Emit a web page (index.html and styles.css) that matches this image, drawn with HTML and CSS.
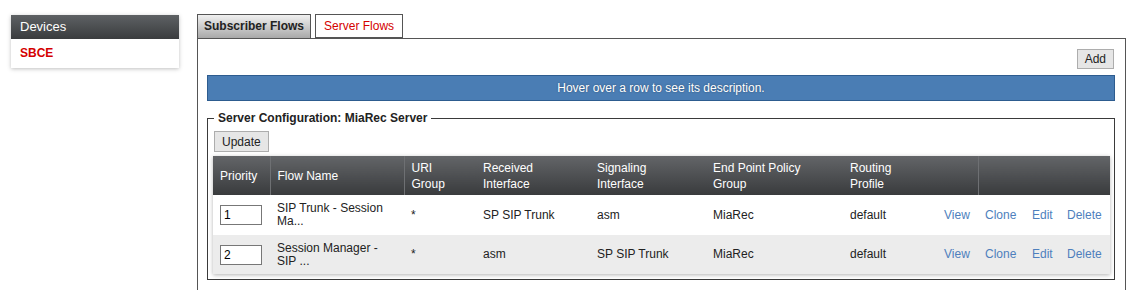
FILE: index.html
```html
<!DOCTYPE html>
<html lang="en">
<head>
    <meta charset="UTF-8">
    <title>Server Flows</title>
    <link rel="stylesheet" href="styles.css">
</head>
<body>
    <div class="sidebar">
        <div class="sidebar-head">Devices</div>
        <div class="sidebar-item">SBCE</div>
    </div>

    <div class="main">
        <div class="tabs">
            <div class="tab">Subscriber Flows</div>
            <div class="tab active">Server Flows</div>
        </div>

        <div class="tab-panel">
            <div class="toolbar">
                <button class="btn">Add</button>
            </div>
            <div class="info-bar">Hover over a row to see its description.</div>

            <fieldset class="group">
                <legend>Server Configuration: MiaRec Server</legend>
                <button class="btn">Update</button>

                <table class="flows">
                    <colgroup>
                        <col style="width: 57px">
                        <col style="width: 134px">
                        <col style="width: 72px">
                        <col style="width: 114px">
                        <col style="width: 116px">
                        <col style="width: 137px">
                        <col style="width: 94px">
                        <col style="width: 41px">
                        <col style="width: 47px">
                        <col style="width: 35px">
                        <col>
                    </colgroup>
                    <thead>
                        <tr>
                            <th>Priority</th>
                            <th class="sep">Flow Name</th>
                            <th class="sep">URI<br>Group</th>
                            <th>Received<br>Interface</th>
                            <th>Signaling<br>Interface</th>
                            <th>End Point Policy<br>Group</th>
                            <th colspan="2">Routing<br>Profile</th>
                            <th colspan="3" class="sep"></th>
                        </tr>
                    </thead>
                    <tbody>
                        <tr>
                            <td><input class="prio" type="text" value="1"></td>
                            <td>SIP Trunk - Session Ma...</td>
                            <td>*</td>
                            <td>SP SIP Trunk</td>
                            <td>asm</td>
                            <td>MiaRec</td>
                            <td>default</td>
                            <td><a href="#">View</a></td>
                            <td><a href="#">Clone</a></td>
                            <td><a href="#">Edit</a></td>
                            <td><a href="#">Delete</a></td>
                        </tr>
                        <tr class="alt">
                            <td><input class="prio" type="text" value="2"></td>
                            <td>Session Manager - SIP ...</td>
                            <td>*</td>
                            <td>asm</td>
                            <td>SP SIP Trunk</td>
                            <td>MiaRec</td>
                            <td>default</td>
                            <td><a href="#">View</a></td>
                            <td><a href="#">Clone</a></td>
                            <td><a href="#">Edit</a></td>
                            <td><a href="#">Delete</a></td>
                        </tr>
                    </tbody>
                </table>
            </fieldset>
        </div>
    </div>
</body>
</html>
```

FILE: styles.css
```css
* {
    box-sizing: border-box;
}

body {
    margin: 0;
    background: #fff;
    font-family: "Liberation Sans", Arial, sans-serif;
    font-size: 12px;
    color: #222;
    display: flex;
    align-items: flex-start;
    height: 290px;
    overflow: hidden;
}

/* left device list */
.sidebar {
    width: 168px;
    margin: 15px 0 0 11px;
    background: #fff;
    box-shadow: 0 1px 4px rgba(0, 0, 0, 0.25);
}

.sidebar-head {
    height: 24px;
    line-height: 24px;
    padding-left: 9px;
    color: #fff;
    font-size: 13px;
    background: linear-gradient(#5e6164, #3a3c3e);
}

.sidebar-item {
    height: 29px;
    line-height: 28px;
    padding-left: 9px;
    color: #d40000;
    font-weight: bold;
}

/* main area */
.main {
    width: 929px;
    margin: 14px 0 0 18px;
}

.tabs {
    display: flex;
    gap: 4px;
    height: 24px;
}

.tab {
    height: 25px;
    line-height: 23px;
    padding: 0 6px;
    border: 1px solid #555;
    font-weight: bold;
    background: linear-gradient(#f0f0f0, #a9a9a9);
    position: relative;
    z-index: 1;
}

.tab.active {
    font-weight: normal;
    color: #d40000;
    background: #fff;
    padding: 0 8px;
    height: 24px;
}

.tab-panel {
    border: 1px solid #555;
    border-bottom: none;
    padding: 0 10px 20px 9px;
    min-height: 260px;
}

.toolbar {
    display: flex;
    justify-content: flex-end;
    padding: 10px 1px 0 0;
}

.btn {
    font-family: "Liberation Sans", Arial, sans-serif;
    font-size: 12px;
    color: #222;
    height: 20px;
    padding: 0 7px;
    background: #e6e6e6;
    border: 1px solid #adadad;
}

.info-bar {
    margin-top: 6px;
    height: 26px;
    line-height: 24px;
    text-align: center;
    color: #fff;
    background: #4a7db4;
    border: 1px solid #2d5c8f;
    text-shadow: 0 0 2px rgba(0, 0, 0, 0.4);
}

.group {
    margin: 10px 0 0 0;
    padding: 0 4px 5px 5px;
    border: 1px solid #3a3a3a;
}

.group legend {
    font-weight: bold;
    padding: 0 4px;
    margin-left: 1px;
    line-height: 14px;
}

.group .btn {
    margin: 6px 0 4px 1px;
    height: 21px;
}

/* flows table */
.flows {
    width: 897px;
    table-layout: fixed;
    border-collapse: collapse;
    box-shadow: 0 1px 4px rgba(0, 0, 0, 0.3);
}

.flows th {
    height: 39px;
    padding: 0 7px;
    text-align: left;
    font-weight: normal;
    line-height: 16px;
    color: #fff;
    background: linear-gradient(#636568, #393b3d);
}

.flows th.sep {
    border-left: 1px solid #6e7073;
}

.flows td {
    height: 40px;
    padding: 0 7px;
    line-height: 13px;
    background: #fff;
    vertical-align: middle;
}

.flows tr.alt td {
    height: 39px;
    background: #ececec;
}

.flows a {
    color: #4e7fbd;
    text-decoration: none;
}

.prio {
    width: 42px;
    height: 20px;
    padding: 0 3px;
    font-family: "Liberation Sans", Arial, sans-serif;
    font-size: 12px;
    color: #000;
    border: 1px solid #777;
    background: #fff;
}
```
